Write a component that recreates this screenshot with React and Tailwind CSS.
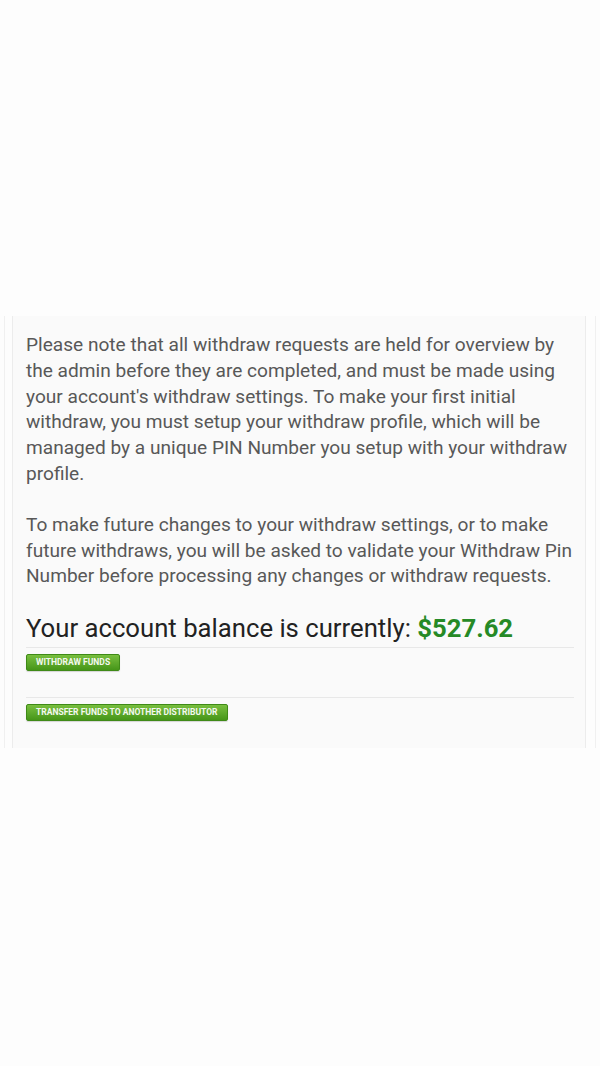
export default function App() {
  return (
    <div className="w-[600px] h-[1066px] bg-[#fdfdfd] flex flex-col" style={{ fontFamily: "Roboto, 'Liberation Sans', sans-serif" }}>
      <div className="h-[316px] shrink-0" />
      <div className="mx-[4px] border-l border-r border-[#f0f0f0] h-[432px]">
        <div className="ml-[7px] mr-[9px] h-full border-l border-r border-[#ececec] bg-[#fafafa] pl-[13px] pr-[8px] pt-[16px]">
          <p className="text-[19.1px] leading-[25.8px] text-[#585858]">
            Please note that all withdraw requests are held for overview by the admin before they are completed, and must be made using your account's withdraw settings. To make your first initial withdraw, you must setup your withdraw profile, which will be managed by a unique PIN Number you setup with your withdraw profile.
          </p>
          <p className="mt-[25px] text-[19.1px] leading-[25.8px] text-[#585858]">
            To make future changes to your withdraw settings, or to make future withdraws, you will be asked to validate your Withdraw Pin Number before processing any changes or withdraw requests.
          </p>
          <h2 className="mt-[24px] text-[25.7px] leading-[30px] text-[#222222]">
            Your account balance is currently: <span className="font-bold text-[#268a26]">$527.62</span>
          </h2>
          <div className="mt-[4px] mr-[3px] border-t border-[#e8e8e8] pt-[6px] pb-[26px]">
            <button className="block h-[17px] px-[9px] rounded-[2px] bg-gradient-to-b from-[#78bf3e] to-[#469618] border border-[#3f8a17] text-[#f4f8ef] text-[8.5px] font-bold uppercase leading-none shadow-[0_1px_1px_rgba(0,0,0,0.15)]">
              Withdraw Funds
            </button>
          </div>
          <div className="mr-[3px] border-t border-[#e8e8e8] pt-[6px]">
            <button className="block h-[17px] px-[9px] rounded-[2px] bg-gradient-to-b from-[#78bf3e] to-[#469618] border border-[#3f8a17] text-[#f4f8ef] text-[8.5px] font-bold uppercase leading-none shadow-[0_1px_1px_rgba(0,0,0,0.15)]">
              Transfer Funds to Another Distributor
            </button>
          </div>
        </div>
      </div>
    </div>
  );
}
